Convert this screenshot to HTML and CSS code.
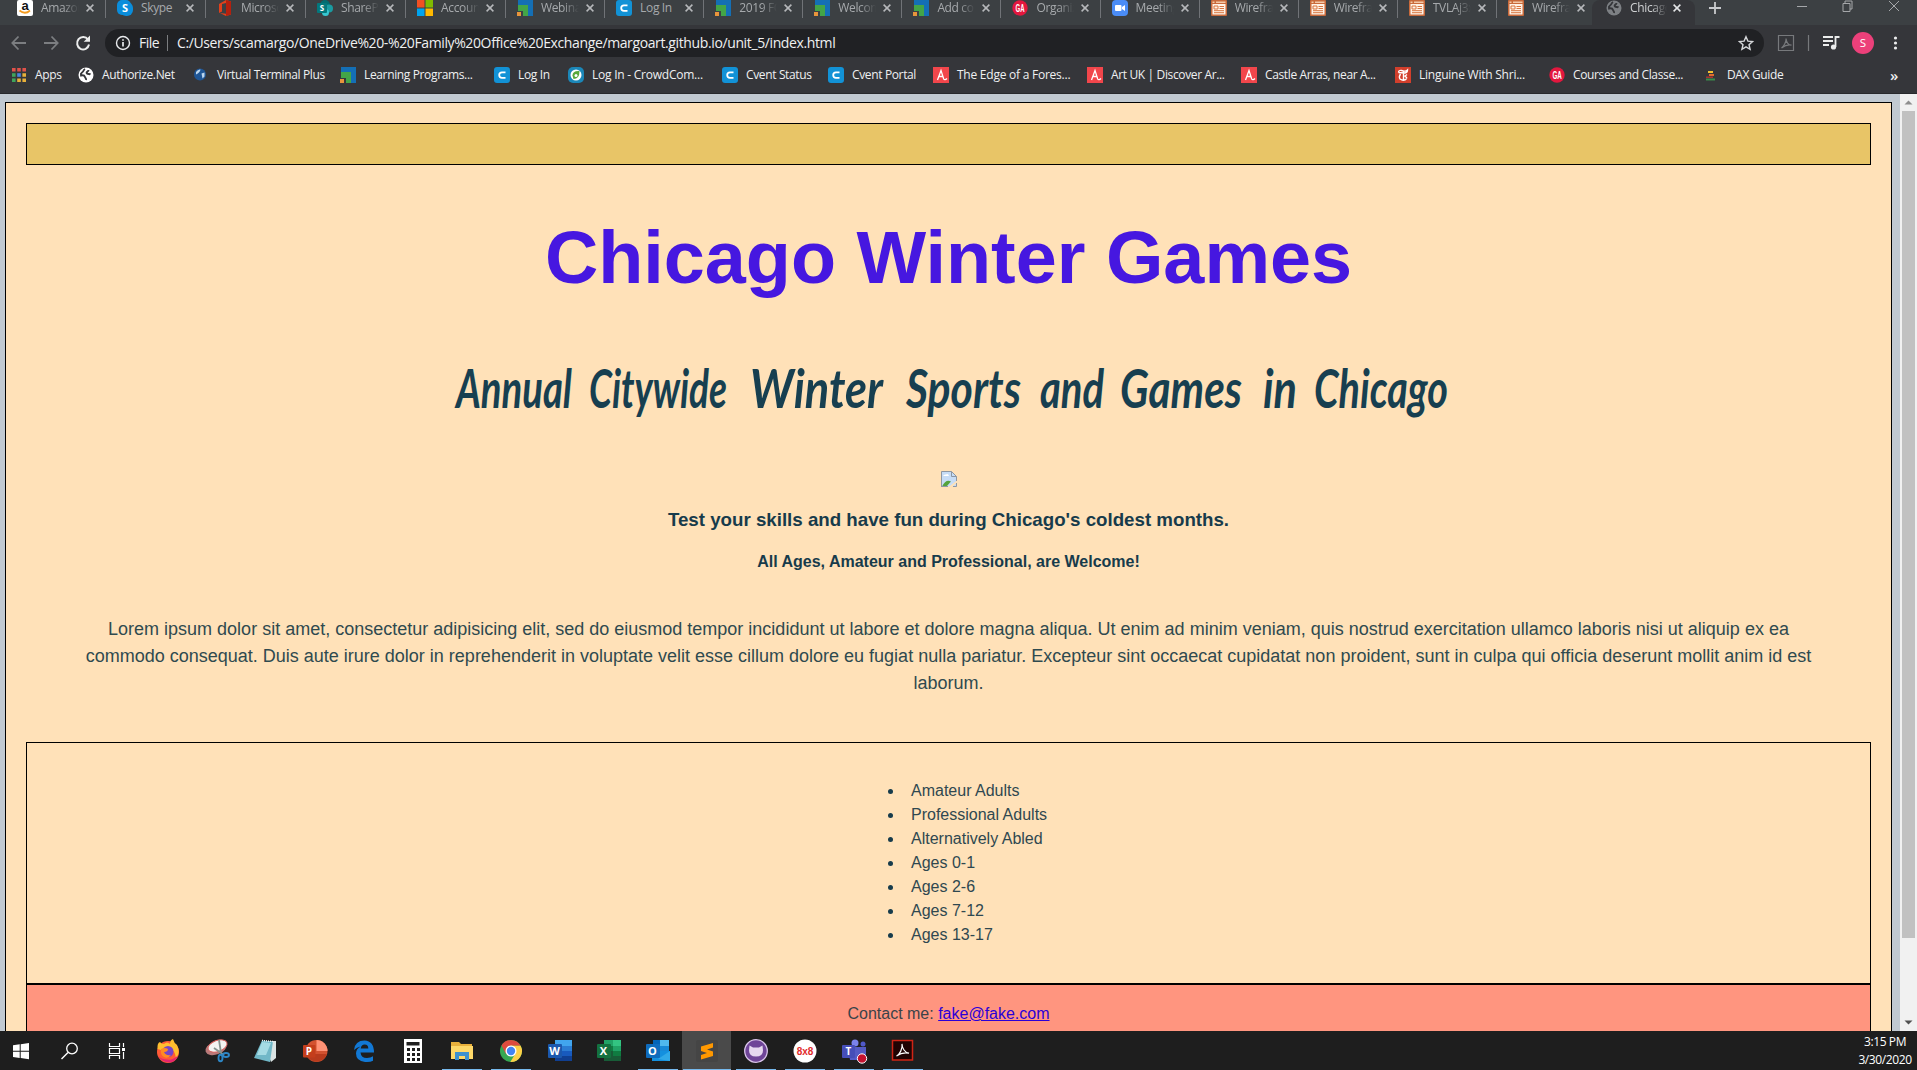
FILE: index.html
```html
<!DOCTYPE html>
<html lang="en">
<head>
<meta charset="utf-8">
<title>Chicago Winter Games</title>
<link rel="stylesheet" href="styles.css">
</head>
<body>
<svg class="defs" width="0" height="0" aria-hidden="true">
  <defs>
    <symbol id="x" viewBox="0 0 8 8"><path d="M.6.6l6.8 6.8M7.4.6L.6 7.4" stroke="currentColor" stroke-width="1.5" fill="none"/></symbol>
    <symbol id="mosaic" viewBox="0 0 16 16"><path d="M1 0h15v16h-5V5H1z" fill="#146fb5"/><path d="M1 5h10v11H6v-5H1z" fill="#43a547"/><path d="M0 12h4v4H0z" fill="#e8953c"/></symbol>
    <symbol id="cvent" viewBox="0 0 16 16"><rect width="16" height="16" rx="3" fill="#1292d6"/><path d="M11.5 5.3H8a2.8 2.8 0 0 0 0 5.6h3.5" fill="none" stroke="#fff" stroke-width="1.8"/></symbol>
    <symbol id="wire" viewBox="0 0 16 16"><rect width="16" height="16" rx="1" fill="#c96a3b"/><path d="M1.5 4h13v10.500h-13z" fill="#fff3e8"/><path d="M1.500 1.500h2v1.500h-2zM5 1.500h9.500v1.500H5z" fill="#f4c9a8"/><path d="M3 6h4v3H3zM8.500 6.500H13M8.500 8.500H13M3 10.700h10M3 12.700h10" stroke="#d8753f" stroke-width="1" fill="none"/></symbol>
    <symbol id="globe" viewBox="0 0 16 16"><circle cx="8" cy="8" r="7.500" fill="currentColor"/><path d="M7 2c-2 1-1 2.500-3 3.500-1 .7-1.500 1.500-1 3 2-.5 3.500 0 4 1.500s1.500 1.500 1 3M10.500 3c0 2-3 2-1.500 3.500 1 1 2.500 0 3.500 1" fill="none" stroke="#35363a" stroke-width="1.900"/></symbol>
    <symbol id="artuk" viewBox="0 0 16 16"><path d="M0 0h16v16H0z" fill="#f2464b"/><path d="M4.500 13L8 3.500 10.700 12q1 1.500 3.300-.5M5.500 9.500H10" fill="none" stroke="#fff" stroke-width="1.300"/></symbol>
    <symbol id="ga" viewBox="0 0 16 16"><circle cx="8" cy="8" r="7.700" fill="#e3173e"/><text x="8" y="12" text-anchor="middle" textLength="9" lengthAdjust="spacingAndGlyphs" font-family="Liberation Sans" font-weight="bold" font-size="11" fill="#fff">GA</text></symbol>
  </defs>
</svg>

<div class="chrome">
  <div class="tabs">
    <div class="tab wide"><svg class="ico"><rect width="16" height="16" rx="2" fill="#fff"/><text x="8" y="10" text-anchor="middle" font-family="Liberation Sans" font-weight="bold" font-size="13" fill="#111">a</text><path d="M2.500 10.500q5.500 4.500 10.500 0" stroke="#f49b1e" stroke-width="1.700" fill="none"/></svg><span>Amazon</span><svg class="x"><use href="#x"/></svg></div>
    <div class="tab wide"><svg class="ico"><rect width="14" height="15" rx="5" fill="#0a8ddb"/><rect x="3" y="2" width="13" height="14" rx="6" fill="#0a8ddb"/><text x="8" y="12" text-anchor="middle" font-family="Open Sans" font-weight="bold" font-size="11" fill="#fff">S</text></svg><span class="fit">Skype</span><svg class="x"><use href="#x"/></svg></div>
    <div class="tab wide"><svg class="ico"><path d="M2 4l7-4 5 1.500v13L9 16l-6-3 6 .700V3L5 4v7.500L2 13z" fill="#e2401b"/><path d="M9 0l5 1.500v13L9 16z" fill="#b4200e"/></svg><span>Microsoft</span><svg class="x"><use href="#x"/></svg></div>
    <div class="tab wide"><svg class="ico"><circle cx="8" cy="5" r="5" fill="#036c70"/><circle cx="12" cy="8.500" r="4" fill="#1a9ba1"/><circle cx="8.500" cy="12.500" r="3.500" fill="#37c6d0"/><rect y="3" width="10" height="10" rx="1" fill="#03787c"/><text x="5" y="11" text-anchor="middle" font-family="Open Sans" font-weight="bold" font-size="8" fill="#fff">S</text></svg><span>SharePoint</span><svg class="x"><use href="#x"/></svg></div>
    <div class="tab wide"><svg class="ico"><path d="M0 0h7.500v7.500H0z" fill="#f25022"/><path d="M8.500 0H16v7.500H8.500z" fill="#7fba00"/><path d="M0 8.500h7.500V16H0z" fill="#00a4ef"/><path d="M8.500 8.500H16V16H8.500z" fill="#ffb900"/></svg><span>Account</span><svg class="x"><use href="#x"/></svg></div>
    <div class="tab"><svg class="ico"><use href="#mosaic"/></svg><span>Webinar</span><svg class="x"><use href="#x"/></svg></div>
    <div class="tab"><svg class="ico"><use href="#cvent"/></svg><span class="fit">Log In</span><svg class="x"><use href="#x"/></svg></div>
    <div class="tab"><svg class="ico"><use href="#mosaic"/></svg><span>2019 FOX</span><svg class="x"><use href="#x"/></svg></div>
    <div class="tab"><svg class="ico"><use href="#mosaic"/></svg><span>Welcome</span><svg class="x"><use href="#x"/></svg></div>
    <div class="tab"><svg class="ico"><use href="#mosaic"/></svg><span>Add contact</span><svg class="x"><use href="#x"/></svg></div>
    <div class="tab"><svg class="ico"><use href="#ga"/></svg><span>Organize</span><svg class="x"><use href="#x"/></svg></div>
    <div class="tab"><svg class="ico"><rect width="16" height="16" rx="4" fill="#4a8cf6"/><rect x="3" y="5" width="6.500" height="6" rx="1" fill="#fff"/><path d="M10 7l3-2v6l-3-2z" fill="#fff"/></svg><span>Meetings</span><svg class="x"><use href="#x"/></svg></div>
    <div class="tab"><svg class="ico"><use href="#wire"/></svg><span>Wireframe</span><svg class="x"><use href="#x"/></svg></div>
    <div class="tab"><svg class="ico"><use href="#wire"/></svg><span>Wireframe</span><svg class="x"><use href="#x"/></svg></div>
    <div class="tab"><svg class="ico"><use href="#wire"/></svg><span>TVLAj3xx</span><svg class="x"><use href="#x"/></svg></div>
    <div class="tab last"><svg class="ico"><use href="#wire"/></svg><span>Wireframe</span><svg class="x"><use href="#x"/></svg></div>
    <div class="tab active"><svg class="ico dim"><use href="#globe"/></svg><span>Chicago</span><svg class="x"><use href="#x"/></svg></div>
    <svg class="plus" viewBox="0 0 14 14"><path d="M7 1v12M1 7h12" stroke="#c8cacd" stroke-width="1.800"/></svg>
    <svg class="winctl" viewBox="0 0 110 26"><path d="M3 6.500h10M49 3.500h7v8h-7zM51 3V1h7v8h-2M95 1l10 10M105 1L95 11" fill="none" stroke="#a5a7aa"/></svg>
  </div>

  <div class="toolbar">
    <svg class="nav" viewBox="0 0 105 34"><g fill="none" stroke="#7c7e81" stroke-width="1.800"><path d="M26 18H13M18.500 11.500L12.300 18l6.200 6.500M44 18h13M51.500 11.500l6.200 6.500-6.200 6.500"/><path d="M88 14.500A6 6.300 0 1 0 89 19.500" stroke="#eceded" stroke-width="2"/></g><path d="M90 10.500v6.300h-6.300z" fill="#eceded"/></svg>
    <div class="omni">
      <svg class="info" viewBox="0 0 16 16"><circle cx="8" cy="8" r="6.500" fill="none" stroke="#e8eaed" stroke-width="1.400"/><path d="M8 7v4.500M8 4.200v1.600" stroke="#e8eaed" stroke-width="1.700"/></svg>
      <span class="file">File</span><i></i><span class="url">C:/Users/scamargo/OneDrive%20-%20Family%20Office%20Exchange/margoart.github.io/unit_5/index.html</span>
      <svg class="star" viewBox="0 0 16 16"><path d="M8 1.700l1.900 4.400 4.700.4-3.600 3.200 1.100 4.700L8 11.900l-4.100 2.500L5 9.700 1.400 6.500l4.700-.4z" fill="none" stroke="#d5d7da" stroke-width="1.400"/></svg>
    </div>
    <svg class="actions" viewBox="0 0 153 34"><g fill="none" stroke="#77797c" stroke-width="1.200"><path d="M14.500 10.500h15v15h-15zM17.500 23c2-1.500 5-6 4.500-9.500.5 4 3 6.500 5.500 6.700-3-.7-6.500.3-10 2.800z"/><path d="M44.500 10v16"/></g><path d="M59 12h10M59 16h10M59 20h6" stroke="#eceded" stroke-width="1.800"/><path d="M71.500 22v-10h4" stroke="#eceded" stroke-width="1.800" fill="none"/><circle cx="69.500" cy="22" r="2.600" fill="#eceded"/><circle cx="99" cy="18" r="11" fill="#ec407a"/><text x="99" y="22" text-anchor="middle" font-family="Open Sans" font-size="11.500" fill="#fff">S</text><g fill="#eceded"><circle cx="131.500" cy="13" r="1.600"/><circle cx="131.500" cy="18" r="1.600"/><circle cx="131.500" cy="23" r="1.600"/></g></svg>
  </div>

  <div class="bookmarks">
    <div><svg class="ico" viewBox="0 0 16 16"><path d="M1 1h3.600v3.600H1zM6.200 1h3.600v3.600H6.200zM11.400 1H15v3.600h-3.600z" fill="#e0524a"/><path d="M1 6.200h3.600v3.600H1z" fill="#3fa45b"/><path d="M6.200 6.200h3.600v3.600H6.200z" fill="#4a86e0"/><path d="M11.400 6.200H15v3.600h-3.600zM6.200 11.400h3.600V15H6.200zM11.400 11.400H15V15h-3.600z" fill="#e8b13a"/><path d="M1 11.400h3.600V15H1z" fill="#3fa45b"/></svg><span>Apps</span></div>
    <div><svg class="ico white"><use href="#globe"/></svg><span>Authorize.Net</span></div>
    <div><svg class="ico"><circle cx="7" cy="7.500" r="6" fill="#1f5696"/><path d="M3 5q2-3 4.500-2.500-.5 3-4.500 5zM8.500 6.500l3-1v4l-2 2z" fill="#bcd6ee"/></svg><span>Virtual Terminal Plus</span></div>
    <div><svg class="ico"><use href="#mosaic"/></svg><span>Learning Programs...</span></div>
    <div><svg class="ico"><use href="#cvent"/></svg><span>Log In</span></div>
    <div><svg class="ico"><rect width="16" height="16" rx="5" fill="#1b87b8"/><circle cx="8" cy="8" r="5.500" fill="#fff"/><path d="M11.500 4q-7-.5-7 4.500l1 3.500q6 0 6-8z" fill="#58a83b"/><circle cx="8" cy="8.500" r="1.500" fill="#fff"/></svg><span class="loose">Log In - CrowdCom...</span></div>
    <div><svg class="ico"><use href="#cvent"/></svg><span>Cvent Status</span></div>
    <div><svg class="ico"><use href="#cvent"/></svg><span>Cvent Portal</span></div>
    <div><svg class="ico"><use href="#artuk"/></svg><span class="loose">The Edge of a Fores...</span></div>
    <div><svg class="ico"><use href="#artuk"/></svg><span>Art UK | Discover Ar...</span></div>
    <div><svg class="ico"><use href="#artuk"/></svg><span>Castle Arras, near A...</span></div>
    <div><svg class="ico"><path d="M0 0h16v16H0z" fill="#d23f2c"/><path d="M3.500 5.500q0-2.500 3-2 4 1.500 6-.5 0 3-3 3-4-.5-6-.5M8.500 4v8.500M5.500 7q-2 3-.5 5 4 3 7-1M12 7.500l-2 1.500 2 2" fill="none" stroke="#fff" stroke-width="1.400"/></svg><span class="loose">Linguine With Shri...</span></div>
    <div><svg class="ico"><use href="#ga"/></svg><span>Courses and Classe...</span></div>
    <div><svg class="ico"><path d="M5 4h5v2H5z" fill="#f2c230"/><path d="M6 7h5v2H6z" fill="#e06a2c"/><path d="M3 9.500h7v1.500H3z" fill="#a83232"/><path d="M3 11.500h9v2H3z" fill="#3b8a4a"/></svg><span>DAX Guide</span></div>
    <b>»</b>
  </div>
</div>

<div class="viewport">
  <main class="page">
    <header></header>
    <h1>Chicago Winter Games</h1>
    <h2>
      <svg viewBox="0 0 1020 130">
        <g class="script" transform="translate(0 71)">
          <text x="17" textLength="116" lengthAdjust="spacingAndGlyphs">Annual</text>
          <text x="150" textLength="138" lengthAdjust="spacingAndGlyphs">Citywide</text>
          <text x="311" textLength="133" lengthAdjust="spacingAndGlyphs">Winter</text>
          <text x="467" textLength="115" lengthAdjust="spacingAndGlyphs">Sports</text>
          <text x="601" textLength="64" lengthAdjust="spacingAndGlyphs">and</text>
          <text x="681" textLength="122" lengthAdjust="spacingAndGlyphs">Games</text>
          <text x="824" textLength="34" lengthAdjust="spacingAndGlyphs">in</text>
          <text x="875" textLength="134" lengthAdjust="spacingAndGlyphs">Chicago</text>
        </g>
      </svg>
    </h2>
    <svg class="broken" viewBox="0 0 16 16"><path d="M.5.500h10l5 5v10H.5z" fill="#c6dcf6"/><path d="M2 5q1-2 3-1.500Q7 2 8 5z" fill="#fff"/><path d="M1 15.500q4-8 9-5l-4.500 5z" fill="#55a33c"/><path d="M16 9.500v2L11 16H7.500z" fill="#ffe1b8"/><path d="M.5 15.500V.500h10l5 5V10M10.500.500v5h5M0 15.500h7M12 15.500h3.500V12" fill="none" stroke="#8d97a3"/></svg>
    <h3>Test your skills and have fun during Chicago's coldest months.</h3>
    <h4>All Ages, Amateur and Professional, are Welcome!</h4>
    <p class="lorem">Lorem ipsum dolor sit amet, consectetur adipisicing elit, sed do eiusmod tempor incididunt ut labore et dolore magna aliqua. Ut enim ad minim veniam, quis nostrud exercitation ullamco laboris nisi ut aliquip ex ea<br>commodo consequat. Duis aute irure dolor in reprehenderit in voluptate velit esse cillum dolore eu fugiat nulla pariatur. Excepteur sint occaecat cupidatat non proident, sunt in culpa qui officia deserunt mollit anim id est<br>laborum.</p>
    <section>
      <ul>
        <li>Amateur Adults</li>
        <li>Professional Adults</li>
        <li>Alternatively Abled</li>
        <li>Ages 0-1</li>
        <li>Ages 2-6</li>
        <li>Ages 7-12</li>
        <li>Ages 13-17</li>
      </ul>
    </section>
    <footer>Contact me: <a href="mailto:fake@fake.com">fake@fake.com</a></footer>
  </main>
  <div class="scroll"><svg viewBox="0 0 17 17"><path d="M4.500 10.500h8l-4-4z" fill="#8e8e8e"/></svg><div class="thumb"></div><svg viewBox="0 0 17 17"><path d="M4.500 6.500h8l-4 4z" fill="#505050"/></svg></div>
</div>

<div class="taskbar">
  <div class="app"><svg viewBox="0 0 24 24"><path d="M4 6.300l6.700-1v6.400H4zM11.700 5.200L20 4v7.700h-8.300zM4 12.700h6.700v6.400l-6.700-1zM11.700 12.700H20v7.500l-8.300-1.200z" fill="#fff"/></svg></div>
  <div class="app"><svg viewBox="0 0 24 24"><circle cx="14" cy="9.500" r="5.300" fill="none" stroke="#fff" stroke-width="1.300"/><path d="M10 13.500L3.500 20" stroke="#fff" stroke-width="1.400"/></svg></div>
  <div class="app"><svg viewBox="0 0 24 24"><path d="M2.500 4v3.500h10V4M2.500 20v-3.500h10V20M2.500 9.500h10v5h-10zM16.500 4v4M16.500 13v7" fill="none" stroke="#fff" stroke-width="1.200"/><path d="M15 9h3v3h-3z" fill="#fff"/></svg></div>
  <div class="app"><svg viewBox="0 0 24 24"><circle cx="12" cy="13" r="11" fill="#ff5a36"/><path d="M1.500 10Q1 4 4 3q1 2 4 2 3-3 6 0 0-4 3-5 1 4 4 6 4 8-1 13-1-8-6-9-5-1-7 2-4-2-6-2z" fill="#ffbd2e"/><path d="M2 17q5 7 12 6.500 6-1 8-7-5 5-11 4-5 0-9-3.500z" fill="#e4256f"/><circle cx="12" cy="12.500" r="5.500" fill="#7544c8"/><path d="M5 10q4-2 7 0 0 3-4 3 2 4 7 3-3 4-7 2-4-2-3-8z" fill="#ff8a22"/></svg></div>
  <div class="app"><svg viewBox="0 0 24 24"><ellipse cx="11" cy="9" rx="11" ry="6.500" transform="rotate(-20 11 9)" fill="#b87a7a"/><ellipse cx="12.500" cy="7" rx="10" ry="5.500" transform="rotate(-20 12.500 7)" fill="#f4f4f2" stroke="#d8605c"/><path d="M14 1l2 13M9 9l10 7" stroke="#87938f" stroke-width="1.800"/><g fill="none" stroke="#2d86c5" stroke-width="1.900"><ellipse cx="15.500" cy="19" rx="2" ry="3.300"/><ellipse cx="21" cy="16" rx="3" ry="2"/></g></svg></div>
  <div class="app"><svg viewBox="0 0 24 24"><path d="M9 2h13v17l-5 4z" fill="#dbe4e4"/><path d="M8 1.500l11 1L16 23 0 19z" fill="#71b8c8"/><path d="M8 3l9 1-5 12H3z" fill="#a5dbe4"/><path d="M8 1.500l11 1" stroke="#eef3f3" stroke-width="1.500" stroke-dasharray="1 1"/></svg></div>
  <div class="app"><svg viewBox="0 0 24 24"><circle cx="13.500" cy="12" r="11" fill="#d35230"/><path d="M13.500 1a11 11 0 0 1 11 11h-11z" fill="#ff9275"/><path d="M3 15a11 11 0 0 0 21 0z" fill="#b83b1d"/><rect y="6" width="12.500" height="12.500" rx="1" fill="#c43e1c"/><text x="6" y="16" text-anchor="middle" font-family="Open Sans" font-size="10" font-weight="bold" fill="#fff">P</text></svg></div>
  <div class="app"><svg viewBox="0 0 24 24"><path d="M2 11Q3 1.500 12.500 1.500q9.500.5 9.500 12H8.500q.5 5.500 6.500 5.500 3.500 0 6-1.800v4.600Q18 23.500 13 23q-9-1-9-8.500 0-4.500 4.500-7Q5 8 2 11zm6.700-1.500h7.600q0-4-3.600-4-3.400.200-4 4z" fill="#1278d4"/></svg></div>
  <div class="app"><svg viewBox="0 0 24 24"><path d="M3 0h18v24H3z" fill="#fff"/><path d="M5.500 3h13v3.500h-13z" fill="#1f1f1f"/><path d="M6 10.500h13M6 15.500h13M6 20.500h13" stroke="#1f1f1f" stroke-width="3" stroke-dasharray="3 2"/></svg></div>
  <div class="app run"><svg viewBox="0 0 24 24"><path d="M1 3h8l2 2h11v15H1z" fill="#e9b13c"/><path d="M1 7h22v13H1z" fill="#ffd969"/><path d="M5 21v-8h14v8h-4v-4H9v4z" fill="#3d91cf"/></svg></div>
  <div class="app run"><svg viewBox="0 0 24 24"><circle cx="12" cy="12" r="11" fill="#36a852"/><path d="M2.500 6.500A11 11 0 0 1 21.600 6.700H12L7 15z" fill="#dd4b3e"/><path d="M21.600 6.700A11 11 0 0 1 11.300 23l5.500-9-4.800-7.300z" fill="#fdd047"/><circle cx="12" cy="12" r="5.500" fill="#fff"/><circle cx="12" cy="12" r="4.200" fill="#4284f3"/></svg></div>
  <div class="app"><svg viewBox="0 0 24 24"><path d="M7 1h17v6H7z" fill="#41a5ee"/><path d="M7 7h17v5H7z" fill="#2b7cd3"/><path d="M7 12h17v5H7z" fill="#185abd"/><path d="M7 17h17v5H7z" fill="#103f91"/><rect y="5" width="14" height="14" rx="1" fill="#1b58ad"/><text x="6.500" y="16" text-anchor="middle" font-family="Open Sans" font-size="11" font-weight="bold" fill="#fff">W</text></svg></div>
  <div class="app"><svg viewBox="0 0 24 24"><path d="M7 1h9v6H7z" fill="#21a366"/><path d="M16 1h8v6h-8z" fill="#33c481"/><path d="M7 7h9v10H7z" fill="#107c41"/><path d="M16 7h8v5h-8z" fill="#21a366"/><path d="M7 12h17v10H7z" fill="#185c37"/><path d="M16 12h8v5h-8z" fill="#107c41"/><rect y="5" width="14" height="14" rx="1" fill="#14713f"/><text x="6.500" y="16" text-anchor="middle" font-family="Open Sans" font-size="11" font-weight="bold" fill="#fff">X</text></svg></div>
  <div class="app run"><svg viewBox="0 0 24 24"><path d="M7 1h7v11H7z" fill="#0364b8"/><path d="M14 1h9v6h-9z" fill="#50b8ee"/><path d="M14 7h9v6h-9z" fill="#1889d7"/><path d="M6 12h18v10H6z" fill="#1490df"/><path d="M24 12L12 20l12 2z" fill="#30a9e8"/><rect y="5" width="14" height="14" rx="1" fill="#0f6cbd"/><text x="6.500" y="16" text-anchor="middle" font-family="Open Sans" font-size="11" font-weight="bold" fill="#fff">O</text></svg></div>
  <div class="app run focus"><svg viewBox="0 0 24 24"><rect x="1" y="1" width="22" height="22" rx="2" fill="#454545"/><path d="M18 4v4.500L12 10.500l6 2V17L6 20.500V16l6-2-6-2V7.500z" fill="#ff9800"/></svg></div>
  <div class="app run"><svg viewBox="0 0 24 24"><circle cx="12" cy="12" r="11.300" fill="#6f4598" stroke="#d9c4ea" stroke-width="1.300"/><path d="M5.500 6.500l3.500 2h6l3.500-2 .5 5q0 6-7 6t-7-6z" fill="#e6d8ef"/></svg></div>
  <div class="app run"><svg viewBox="0 0 24 24"><circle cx="12" cy="12" r="11.500" fill="#fff"/><text x="12" y="15.500" text-anchor="middle" font-family="Liberation Sans" font-size="10" font-weight="bold" fill="#e22b2b">8x8</text></svg></div>
  <div class="app run"><svg viewBox="0 0 24 24"><circle cx="13" cy="4" r="3.500" fill="#7b83eb"/><circle cx="21" cy="5" r="2.500" fill="#5059c9"/><path d="M6 8h18v7q0 6-6 6H8z" fill="#545bc4"/><rect y="6" width="13" height="13" rx="1" fill="#464eb8"/><text x="6.500" y="16" text-anchor="middle" font-family="Open Sans" font-size="10" font-weight="bold" fill="#fff">T</text><circle cx="20" cy="19.500" r="4.700" fill="#c4122f" stroke="#fff"/></svg></div>
  <div class="app run"><svg viewBox="0 0 24 24"><path d="M1.500 1.500h20v19.500h-20z" fill="#1f0303" stroke="#cf2415" stroke-width="1.500"/><path d="M5.500 17c3-1 6.500-8 5.500-12 0 4 3 9 7 9.200-4-1-9 .3-12.500 2.800z" fill="none" stroke="#fff" stroke-width="1.200"/></svg></div>
  <div class="clock"><span>3:15 PM</span><span>3/30/2020</span></div>
</div>
</body>
</html>
```

FILE: styles.css
```css
* { box-sizing: border-box; }
html, body { margin: 0; height: 1070px; overflow: hidden; }
body { display: flex; flex-direction: column; width: 1917px; font-family: "Liberation Sans", Arial, sans-serif; }
svg { display: block; flex: none; }
.defs { position: absolute; }

.chrome { flex: none; height: 94px; background: #35363a; border-bottom: 1px solid #28292c; color: #eff0f1; font: 12px/16px "Open Sans", "Noto Sans", sans-serif; }
.ico { width: 16px; height: 16px; flex: none; }
.dim { color: #7d8084; }
.white { color: #fff; }

.tabs { display: flex; height: 25px; padding-left: 6px; background: #3c4043; color: #a6a9ac; }
.tab { display: flex; flex: none; width: 99.1px; height: 18px; padding-left: 11px; border-right: 1px solid #707377; }
.tab.wide { width: 100px; }
.tab .ico { margin-right: 8px; }
.tab span { width: 38px; margin-right: 7px; overflow: hidden; white-space: nowrap; letter-spacing: -.35px; -webkit-mask-image: linear-gradient(90deg, #000 58%, transparent); mask-image: linear-gradient(90deg, #000 58%, transparent); }
.tab span.fit { -webkit-mask-image: none; mask-image: none; }
.tab .x { width: 8px; height: 8px; margin-top: 4px; color: #b6b8bb; }
.tab.last { border-color: transparent; }
.tab.active { width: 103px; height: 25px; margin-left: -4px; padding-left: 14px; border: 0; border-radius: 8px 8px 0 0; background: #35363a; color: #cfd1d3; }
.tab.active span { width: 37px; margin-right: 6px; }
.tab.active .x { color: #e5e6e8; }
.plus { width: 14px; height: 14px; margin: 1px 0 0 13px; }
.winctl { width: 110px; height: 26px; margin-left: 72px; }

.toolbar { display: flex; height: 34px; }
.nav { width: 105px; height: 34px; }
.omni { display: flex; align-items: center; width: 1659px; height: 28px; margin-top: 4px; padding: 0 10px; border-radius: 14px; background: #202124; font-size: 14px; white-space: nowrap; }
.info { width: 16px; height: 16px; margin-right: 8px; }
.file { width: 28px; letter-spacing: -.5px; }
.omni i { width: 1px; height: 16px; background: #7b7d80; }
.url { margin-left: 9px; letter-spacing: -.38px; }
.star { width: 16px; height: 16px; margin-left: auto; }
.actions { width: 153px; height: 34px; }

.bookmarks { display: grid; grid-template-columns: 67px 115px 147px 154px 74px 154px 106px 105px 154px 154px 154px 154px 154px 187px 20px; height: 32px; padding-left: 11px; align-items: center; white-space: nowrap; letter-spacing: -.36px; }
.bookmarks div { display: flex; gap: 8px; }
.bookmarks .loose { letter-spacing: -.24px; }
.bookmarks b { font-size: 15px; font-weight: 600; }

.viewport { display: flex; flex: none; height: 937px; background: #c1c9d1; overflow: hidden; }
.page { display: flex; flex-direction: column; flex: none; width: 1887px; height: 1000px; margin: 8px 8px 0 5px; padding: 20px; border: 1px solid #000; background: #ffe1b8; color: #173b4b; text-align: center; }
.page > * { flex: none; }
header { height: 42px; border: 1px solid #000; background: #e8c567; }
h1 { margin: 48px 0 0; height: 90px; line-height: 90px; font-size: 73.8px; color: #4617e0; white-space: nowrap; }
h2 { margin: 34px 0 0; height: 134px; }
h2 svg { width: 1020px; height: 130px; margin: 0 auto; }
.script { font: italic 700 53px Lato, sans-serif; fill: #173f50; }
.broken { width: 16px; height: 16px; margin: 0 auto; }
h3 { margin: 21px 0 0; line-height: 24px; font-size: 18.72px; }
h4 { margin: 20px 0 0; line-height: 20px; font-size: 16px; }
.lorem { margin: 44px 0 0; height: 81px; font-size: 18px; line-height: 27px; color: #2f4a4f; white-space: nowrap; }
section { height: 242px; margin-top: 45px; padding-top: 36px; border: 1px solid #000; }
ul { width: 190px; margin: 0 0 0 837px; padding: 0 0 0 40px; text-align: left; font-size: 16px; line-height: 24px; color: #2f4850; }
li { padding-left: 7px; }
li::marker { color: #173b4b; }
footer { height: 90px; padding-top: 17px; border: 1px solid #000; background: #ff957f; font-size: 16px; line-height: 24px; color: #3a4349; }
footer a { color: #2a00d8; }

.scroll { width: 17px; background: #f1f1f1; }
.scroll svg { width: 17px; height: 17px; }
.thumb { width: 13px; height: 827px; margin: 0 2px 76px; background: #c1c1c1; }

.taskbar { display: flex; flex: none; height: 39px; padding-left: 0; background: #1e1e1e; color: #fff; }
.app { display: flex; flex: none; justify-content: center; width: 49px; height: 39px; padding-top: 8px; }
.app:first-child { width: 45px; padding-right: 3px; }
.app svg { width: 24px; height: 24px; overflow: visible; }
.run { background: linear-gradient(#76b9ed, #76b9ed) center bottom / 40px 1px no-repeat; }
.focus { background: linear-gradient(#76b9ed, #76b9ed) center bottom / 48px 1px no-repeat, #4a4a4a; }
.clock { display: flex; flex-direction: column; width: 64px; margin-left: auto; padding-top: 2px; text-align: center; font: 12px/18px "Open Sans", sans-serif; letter-spacing: -.4px; }
```
